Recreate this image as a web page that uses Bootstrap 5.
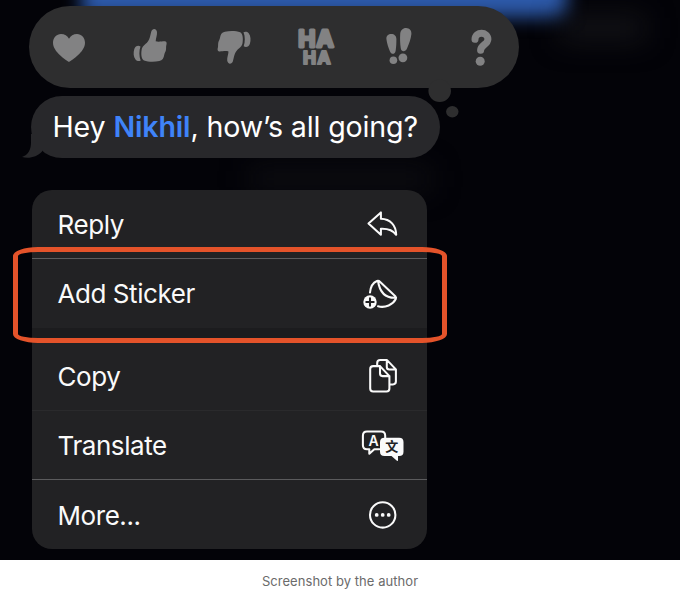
<!DOCTYPE html>
<html lang="en">
<head>
<meta charset="utf-8">
<meta name="viewport" content="width=device-width, initial-scale=1">
<title>Message menu</title>
<link href="https://cdn.jsdelivr.net/npm/bootstrap@5.3.0/dist/css/bootstrap.min.css" rel="stylesheet">
<style>
body{font-family:Inter,"Liberation Sans",sans-serif;width:680px;height:590px;overflow:hidden;background:#fff}
.stage{height:560px;background:#030308;padding-top:6px}
.glow{left:82px;top:-36px;width:485px;height:53px;background:#2d5aab;filter:blur(9px)}
.haze{background:#131317;filter:blur(14px)}
.haze-a{left:560px;top:16px;width:85px;height:24px}
.haze-b{left:250px;top:168px;width:180px;height:22px;background:#0e0e12}
.tapbacks{margin-left:29px;width:490px;height:82px;border-radius:41px;background:#2e2e2f;padding:0 14px 0 16px;z-index:1}
.tapbacks svg{width:48px;height:48px;fill:#828283;overflow:visible}
.thought{left:428px;top:79px;z-index:1}
.msg{margin:8px 0 0 31px;width:409px;height:61.5px;border-radius:31px;background:#28282b;color:#fff;font-size:28.6px;letter-spacing:-.15px;padding:2px 0 0 21.5px;white-space:nowrap}
.msg b{font-weight:600;color:#3f83f8}
.msg .tail{left:-10px;bottom:0}
.menu{margin:32px 0 0 32px;width:395px;height:359px;border-radius:20px;background:#222224;color:#fafafa;overflow:hidden}
.menu button{height:69.2px;background:none;border:0;color:inherit;font-size:26px;letter-spacing:-.43px;padding:1px 19px 0 25.5px;text-align:left}
.menu svg{width:50px;height:50px;fill:none;stroke:#fafafa;stroke-width:2.05;stroke-linecap:round;stroke-linejoin:round;letter-spacing:0}
.rule{border-bottom:1px solid #5b5b5d!important}
.rule-dim{border-bottom:1px solid #2a2a2c!important}
.gap-band{height:14px;background:#1c1c1e}
.highlight{left:12.5px;top:247px;width:434.5px;height:96px;border:5.5px solid #e4532a;border-radius:25px/9px;z-index:2}
.caption{height:30px;padding-top:13px;line-height:17px;font-size:13px;letter-spacing:.05px;color:#6b6b6b}
</style>
<script src="https://cdn.jsdelivr.net/npm/bootstrap@5.3.0/dist/js/bootstrap.bundle.min.js"></script>
</head>
<body>
<main class="stage position-relative overflow-hidden">
  <div class="glow position-absolute"></div>
  <div class="haze haze-a position-absolute"></div>
  <div class="haze haze-b position-absolute"></div>

  <div class="tapbacks position-relative d-flex align-items-center justify-content-between">
    <svg viewBox="45 24 48 48"><path d="M69 63C66 61 53 53 53 43.800C53 38.500 56.500 34.900 61 34.900C64.500 34.900 67.500 36.800 69 39.700C70.500 36.800 73.500 34.900 77 34.900C81.500 34.900 85 38.500 85 43.800C85 53 72 61 69 63Z"/></svg>
    <svg viewBox="0 0 48 48"><g id="thumb"><path d="M24.300 8.500C25.200 5.200 29.500 5 30 9.100C30.300 12.200 28.800 15.400 28.700 18.300C31.700 19.200 35.600 18.100 38 18.300C40 18.600 39.800 20.600 39.300 22.300C38.900 24 39.300 25.300 38.900 27.300C38.500 29.200 37.500 30 37.200 32C36.800 35 35.500 37.400 32.300 38C27.500 39 21 39 17 37.400C14.200 36 14 30.500 14.600 27C15.200 23 17.800 21.700 19.700 20C22.700 17.200 23.200 12.500 24.300 8.500Z"/><path d="M13.500 23.500C11.300 22 8.500 22.700 7.300 26C6.200 29.500 6.400 34 8.500 36.500C10 38.200 12.300 38.400 13.700 37.400C12 33.500 12 27.500 13.500 23.500Z"/></g></svg>
    <svg viewBox="0 0 48 48"><use href="#thumb" transform="rotate(180 23.600 23.350)"/></svg>
    <svg viewBox="292 24 48 48"><g font-family="Inter,sans-serif" font-weight="700" stroke="#828283" stroke-linejoin="round" stroke-linecap="round"><text x="298.200 316.400" y="48.400" font-size="23" stroke-width="2.900">HA</text><text x="303 317.600" y="64.600" font-size="17.400" stroke-width="2.200">HA</text></g></svg>
    <svg viewBox="374.600 24 48 48"><path d="M386 40C385.800 36.800 388 35 390.800 35C394 35 396 37 396 40C396 44.500 395.800 48 395.300 51.500C394.900 55.500 391 56 389.600 52.500C388 48.500 386.500 44.500 386 40Z"/><circle cx="393" cy="61.300" r="3.800"/><path d="M399.800 35C400 31.500 402.500 29 405.800 29.100C409 29.200 411.300 31.500 411 35C410.500 40 408.500 45 406.600 49.500C405 53.300 400.800 53 400.300 49C399.700 44.500 399.500 39.500 399.800 35Z"/><circle cx="402.500" cy="58.800" r="4.400"/></svg>
    <svg viewBox="457 24 48 48"><path d="M475 40.300C475.200 32.100 488 32.400 487.900 40.300C487.800 45.800 480.900 45.500 480.600 51.300" fill="none" stroke="#828283" stroke-width="7" stroke-linecap="round" stroke-linejoin="round"/><circle cx="480.200" cy="62.300" r="4.500"/></svg>
  </div>

  <div class="msg position-relative d-flex align-items-center">
    <svg class="tail position-absolute" width="28" height="24" viewBox="21 133.500 28 24"><path d="M31 130V142C31 149 28 154.500 22 156.500C29 158.500 37 156.500 42 151V130Z" fill="#28282b"/></svg>
    <span class="position-relative"><span>Hey </span><b>Nikhil</b>, how’s all going?</span>
  </div>
  <svg class="thought position-absolute" width="32" height="40" viewBox="428 79 32 40" fill="#2e2e2f"><circle cx="439.700" cy="90.800" r="11.300"/><ellipse cx="452.300" cy="111.700" rx="6.200" ry="5.700"/></svg>

  <div class="menu position-relative d-flex flex-column">
    <button class="rule flex-shrink-0 d-flex align-items-center justify-content-between">Reply
      <svg viewBox="358 199.500 50 50"><path d="M368.500 224L380.900 212.900V219.300C390.500 219.600 396 226 396.200 235.300C393 230.800 388 229 380.900 229.300V235.300Z"/></svg></button>
    <button class="flex-shrink-0 d-flex align-items-center justify-content-between">Add Sticker
      <svg viewBox="358 269 50 50"><path d="M370 292.500C370.500 287 373.500 282.500 377 281Q378.700 280.500 380.200 281.900L395.300 296.200Q396.600 297.500 395.800 299C393 304.500 385.500 308.300 378 306.300M378 281C379.500 291 385 298.300 395.800 297.800"/><circle cx="370" cy="302" r="6.700" fill="#fafafa" stroke="none"/><path d="M366.300 302H373.700M370 298.300V305.700" stroke="#222224"/></svg></button>
    <div class="gap-band flex-shrink-0"></div>
    <button class="rule-dim flex-shrink-0 d-flex align-items-center justify-content-between">Copy
      <svg viewBox="358 350.900 50 50"><path d="M380 366H373.200Q370.200 366 370.200 369V388.300Q370.200 391.300 373.200 391.300H386.500Q389.400 391.300 389.400 388.300V376Z M380 366V373.500Q380 376 382.500 376H389.400M377.200 365.500V362.800Q377.200 359.800 380.200 359.800H386.800L395.900 369.300V381.500Q395.900 384.300 393 384.300H390M386.800 359.800V366.800Q386.800 369.300 389.300 369.300H395.900"/></svg></button>
    <button class="rule flex-shrink-0 d-flex align-items-center justify-content-between">Translate
      <svg viewBox="358 420.300 50 50"><path d="M385.200 437V435Q385.200 430.800 381 430.800H367Q362.900 430.800 362.900 435V444.500Q362.900 448.500 367 448.500H369.300V453L374.300 448.500H379.500"/><path d="M384.500 437H399.200Q403.500 437 403.500 441.300V451Q403.500 455.300 399.200 455.300H398V459.700Q397.700 460.500 396.900 460L391.500 455.300H384.500Q380 455.300 380 451V441.300Q380 437 384.500 437Z" fill="#fafafa" stroke="none"/><g stroke="none" text-anchor="middle"><text x="373.700" y="445" font-size="14" font-weight="600" fill="#fafafa" font-family="Inter,sans-serif">A</text><text x="391.700" y="450.800" font-size="13" font-weight="700" fill="#222224" font-family="'Noto Sans CJK SC',sans-serif">文</text></g></svg></button>
    <button class="flex-shrink-0 d-flex align-items-center justify-content-between">More...
      <svg viewBox="358 489.900 50 50"><circle cx="382.700" cy="514.800" r="12.700"/><g fill="#fafafa" stroke="none"><circle cx="376.700" cy="514.800" r="1.900"/><circle cx="382.700" cy="514.800" r="1.900"/><circle cx="388.700" cy="514.800" r="1.900"/></g></svg></button>
  </div>
  <div class="highlight position-absolute"></div>
</main>
<p class="caption text-center mb-0">Screenshot by the author</p>
</body>
</html>
